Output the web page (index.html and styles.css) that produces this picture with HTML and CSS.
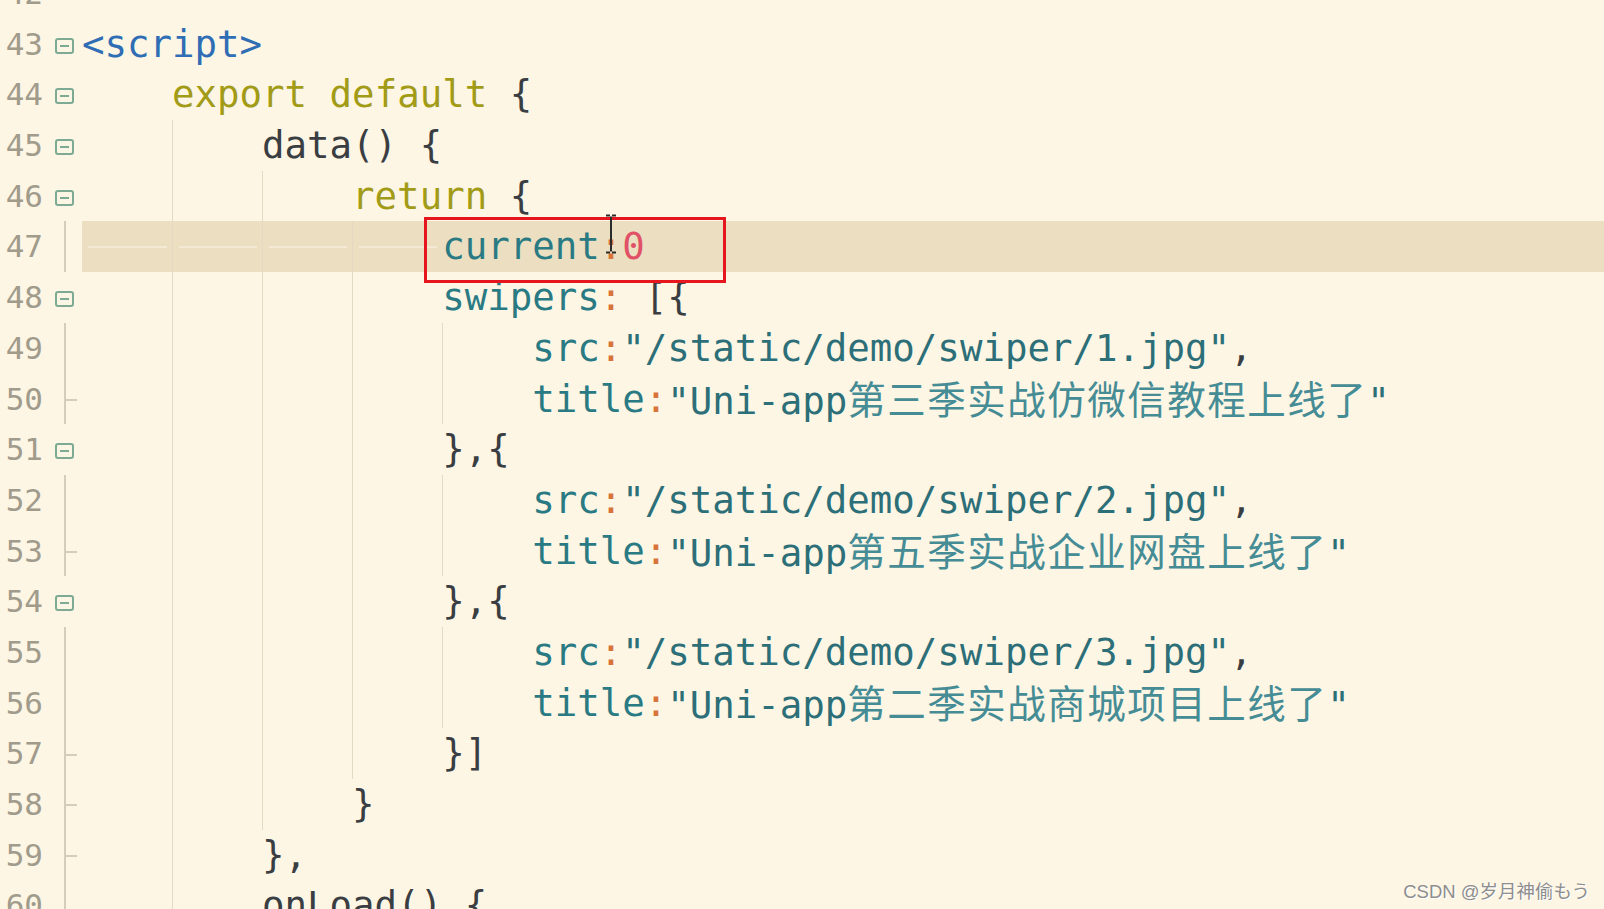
FILE: index.html
```html
<!DOCTYPE html>
<html lang="zh-CN">
<head>
<meta charset="utf-8">
<title>editor</title>
<link rel="stylesheet" href="styles.css">
</head>
<body>
<div class="editor">
  <div class="row"><div class="ln">42</div><div class="fold"></div><div class="code"></div></div>
  <div class="row"><div class="ln">43</div><div class="fold"><span class="icon"></span></div><div class="code"><span class="tag">&lt;script&gt;</span></div></div>
  <div class="row"><div class="ln">44</div><div class="fold"><span class="icon"></span></div><div class="code"><span class="ind"></span><span class="kw">export default</span> {</div></div>
  <div class="row"><div class="ln">45</div><div class="fold"><span class="icon"></span></div><div class="code"><span class="ind"></span><span class="ind g"></span>data() {</div></div>
  <div class="row"><div class="ln">46</div><div class="fold"><span class="icon"></span></div><div class="code"><span class="ind"></span><span class="ind g"></span><span class="ind g"></span><span class="kw">return</span> {</div></div>
  <div class="row active"><div class="ln">47</div><div class="fold bar"></div><div class="code"><span class="ind ws"></span><span class="ind g ws"></span><span class="ind g ws"></span><span class="ind g ws"></span><span class="key">current</span><span class="colon">:</span><span class="num">0</span></div></div>
  <div class="row"><div class="ln">48</div><div class="fold"><span class="icon"></span></div><div class="code"><span class="ind"></span><span class="ind g"></span><span class="ind g"></span><span class="ind g"></span><span class="key">swipers</span><span class="colon">:</span> [{</div></div>
  <div class="row"><div class="ln">49</div><div class="fold bar"></div><div class="code"><span class="ind"></span><span class="ind g"></span><span class="ind g"></span><span class="ind g"></span><span class="ind g"></span><span class="key">src</span><span class="colon">:</span><span class="str">"/static/demo/swiper/1.jpg"</span>,</div></div>
  <div class="row"><div class="ln">50</div><div class="fold bar tick"></div><div class="code"><span class="ind"></span><span class="ind g"></span><span class="ind g"></span><span class="ind g"></span><span class="ind g"></span><span class="key">title</span><span class="colon">:</span><span class="str">"Uni-app<span class="zh">第三季实战仿微信教程上线了</span>"</span></div></div>
  <div class="row"><div class="ln">51</div><div class="fold"><span class="icon"></span></div><div class="code"><span class="ind"></span><span class="ind g"></span><span class="ind g"></span><span class="ind g"></span>},{</div></div>
  <div class="row"><div class="ln">52</div><div class="fold bar"></div><div class="code"><span class="ind"></span><span class="ind g"></span><span class="ind g"></span><span class="ind g"></span><span class="ind g"></span><span class="key">src</span><span class="colon">:</span><span class="str">"/static/demo/swiper/2.jpg"</span>,</div></div>
  <div class="row"><div class="ln">53</div><div class="fold bar tick"></div><div class="code"><span class="ind"></span><span class="ind g"></span><span class="ind g"></span><span class="ind g"></span><span class="ind g"></span><span class="key">title</span><span class="colon">:</span><span class="str">"Uni-app<span class="zh">第五季实战企业网盘上线了</span>"</span></div></div>
  <div class="row"><div class="ln">54</div><div class="fold"><span class="icon"></span></div><div class="code"><span class="ind"></span><span class="ind g"></span><span class="ind g"></span><span class="ind g"></span>},{</div></div>
  <div class="row"><div class="ln">55</div><div class="fold bar"></div><div class="code"><span class="ind"></span><span class="ind g"></span><span class="ind g"></span><span class="ind g"></span><span class="ind g"></span><span class="key">src</span><span class="colon">:</span><span class="str">"/static/demo/swiper/3.jpg"</span>,</div></div>
  <div class="row"><div class="ln">56</div><div class="fold bar"></div><div class="code"><span class="ind"></span><span class="ind g"></span><span class="ind g"></span><span class="ind g"></span><span class="ind g"></span><span class="key">title</span><span class="colon">:</span><span class="str">"Uni-app<span class="zh">第二季实战商城项目上线了</span>"</span></div></div>
  <div class="row"><div class="ln">57</div><div class="fold bar tick"></div><div class="code"><span class="ind"></span><span class="ind g"></span><span class="ind g"></span><span class="ind g"></span>}]</div></div>
  <div class="row"><div class="ln">58</div><div class="fold bar tick"></div><div class="code"><span class="ind"></span><span class="ind g"></span><span class="ind g"></span>}</div></div>
  <div class="row"><div class="ln">59</div><div class="fold bar tick"></div><div class="code"><span class="ind"></span><span class="ind g"></span>},</div></div>
  <div class="row"><div class="ln">60</div><div class="fold bar"></div><div class="code"><span class="ind"></span><span class="ind g"></span>onLoad() {</div></div>
</div>

<div class="redbox"></div>
<svg class="ibeam" width="14" height="40" viewBox="0 0 14 40">
  <path d="M2 1.5 H6 M8 1.5 H12 M7 2.5 V37.5 M2 38.5 H6 M8 38.5 H12" stroke="#2b2b2b" stroke-width="2" fill="none"/>
</svg>
<div class="watermark">CSDN @岁月神偷もう</div>
</body>
</html>
```

FILE: styles.css
```css
html, body {
  margin: 0;
  padding: 0;
  background: #fdf6e5;
  overflow: hidden;
  width: 1604px;
  height: 909px;
}

.editor {
  margin-top: -32px;
  display: flex;
  flex-direction: column;
}

.row {
  display: flex;
  height: 50.7px;
  align-items: stretch;
}

.ln {
  width: 43px;
  flex: none;
  text-align: right;
  font-family: "DejaVu Sans Mono", monospace;
  font-size: 31px;
  line-height: 50.7px;
  color: #a19b8c;
}

.fold {
  width: 39px;
  flex: none;
  display: flex;
  align-items: center;
}

.fold .icon {
  margin-left: 12px;
  margin-top: 3px;
  width: 19px;
  height: 16px;
  box-sizing: border-box;
  border: 2px solid #7daa93;
  border-radius: 3px;
  background: linear-gradient(#7daa93, #7daa93) no-repeat center / 9px 2px;
}

.fold.bar {
  background: linear-gradient(#d5ccba, #d5ccba) no-repeat 21px 0 / 2px 100%;
}

.fold.bar.tick {
  background:
    linear-gradient(#d5ccba, #d5ccba) no-repeat 21px 0 / 2px 100%,
    linear-gradient(#d5ccba, #d5ccba) no-repeat 23px 52% / 11px 2px;
}

.code {
  flex: 1;
  display: flex;
  align-items: center;
  white-space: pre;
  font-family: "DejaVu Sans Mono", monospace;
  font-size: 37.4px;
  line-height: 50.7px;
  color: #3a3e42;
}

.row.active .code {
  background: #ecdfc1;
}

.ind {
  display: inline-block;
  width: 4ch;
  height: 100%;
  flex: none;
  box-sizing: border-box;
}

.ind.g {
  border-left: 1px solid #e4dac4;
}

.ind.ws {
  background: linear-gradient(#f4ead3, #f4ead3) no-repeat center / calc(100% - 11px) 2px;
}

.tag { color: #2f6db4; }
.kw { color: #a29b17; }
.key { color: #2a7a83; }
.colon { color: #d8733a; }
.num { color: #e05066; }
.str { color: #2c6f78; }

.zh {
  font-family: "Noto Sans CJK SC", sans-serif;
  font-size: 38.5px;
  letter-spacing: 1.5px;
  color: #468c95;
}

.redbox {
  position: absolute;
  left: 424px;
  top: 217px;
  width: 296px;
  height: 60px;
  border: 3px solid #e5161e;
}

.ibeam {
  position: absolute;
  left: 604px;
  top: 214px;
}

.watermark {
  position: absolute;
  right: 14px;
  bottom: 6px;
  font-family: "Liberation Sans", "Noto Sans CJK SC", sans-serif;
  font-size: 18.5px;
  color: #8d8d8d;
  text-shadow: 1px 1px 0 #ffffff;
}
```
